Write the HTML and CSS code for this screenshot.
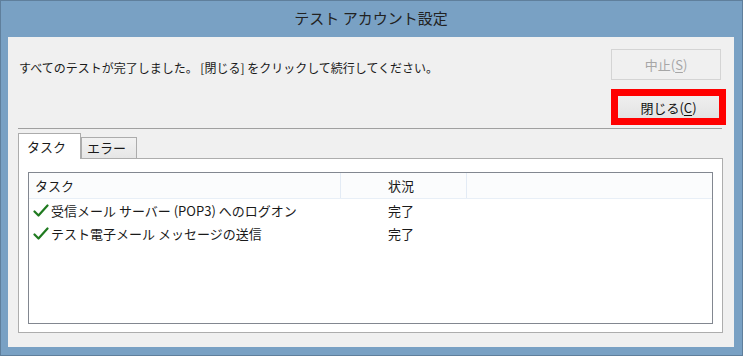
FILE: index.html
```html
<!DOCTYPE html>
<html lang="ja">
<head>
<meta charset="utf-8">
<title>テスト アカウント設定</title>
<link rel="stylesheet" href="styles.css">
</head>
<body>
<div class="window">
  <div class="titlebar">テスト アカウント設定</div>
  <div class="client">
    <div class="header">
      <div class="message">すべてのテストが完了しました。 [閉じる] をクリックして続行してください。</div>
      <div class="btn btn-disabled">中止(<u>S</u>)</div>
      <div class="btn btn-close">閉じる(<u>C</u>)</div>
    </div>
    <div class="separator"></div>
    <div class="tabs">
      <div class="tab tab-active">タスク</div>
      <div class="tab">エラー</div>
    </div>
    <div class="panel">
      <div class="listview">
        <div class="lv-row lv-head">
          <div class="col col-task">タスク</div>
          <div class="col col-status">状況</div>
          <div class="col col-rest"></div>
        </div>
        <div class="lv-row">
          <div class="col col-task"><svg class="check" viewBox="0 0 16 14" width="16" height="14"><path d="M1.5 7.5 L5.5 11.5 L14.5 1.5" fill="none" stroke="#1f7a1f" stroke-width="2.2" stroke-linecap="round" stroke-linejoin="round"/></svg>受信メール サーバー (POP3) へのログオン</div>
          <div class="col col-status">完了</div>
        </div>
        <div class="lv-row">
          <div class="col col-task"><svg class="check" viewBox="0 0 16 14" width="16" height="14"><path d="M1.5 7.5 L5.5 11.5 L14.5 1.5" fill="none" stroke="#1f7a1f" stroke-width="2.2" stroke-linecap="round" stroke-linejoin="round"/></svg>テスト電子メール メッセージの送信</div>
          <div class="col col-status">完了</div>
        </div>
      </div>
    </div>
  </div>
</div>
</body>
</html>
```
FILE: styles.css
```css
* { box-sizing: border-box; }
html, body { margin: 0; padding: 0; }
body {
  width: 743px;
  height: 356px;
  font-family: "Noto Sans CJK JP", "Noto Sans", sans-serif;
  font-size: 12px;
  color: #1a1a1a;
  overflow: hidden;
}
.window {
  width: 743px;
  height: 356px;
  background: #79a1c4;
  border: 1px solid #5f7f9c;
  display: flex;
  flex-direction: column;
  padding: 0 8px 8px 7px;
}
.titlebar {
  height: 36px;
  line-height: 34px;
  text-align: center;
  font-size: 15px;
  color: #222;
  flex: none;
}
.client {
  flex: 1;
  background: #f0f0f0;
  display: flex;
  flex-direction: column;
  padding: 12px 8px 14px 10px;
}
.header {
  display: grid;
  grid-template-columns: 1fr auto;
  grid-template-rows: 31px 36px;
  row-gap: 9px;
}
.message {
  grid-column: 1;
  grid-row: 1;
  align-self: center;
  padding-top: 6px;
  padding-left: 1px;
  white-space: nowrap;
}
.btn {
  display: flex;
  align-items: center;
  justify-content: center;
  font-size: 13px;
}
.btn u { text-decoration: underline; text-underline-offset: 2px; }
.btn-disabled {
  grid-column: 2;
  grid-row: 1;
  width: 110px;
  margin-right: 3px;
  border: 1px solid #d4d4d4;
  background: #f0f0f0;
  color: #a6a6a6;
}
.btn-close {
  grid-column: 2;
  grid-row: 2;
  width: 115px;
  justify-self: end;
  border: 7px solid #ff0000;
  background: linear-gradient(#efefef, #e3e3e3);
  color: #111;
  padding-top: 1px;
}
.separator {
  height: 1px;
  background: #a0a0a0;
  margin: 3px 4px 0 0;
}
.tabs {
  display: flex;
  align-items: flex-end;
  margin-top: 4px;
  height: 25px;
  position: relative;
  z-index: 1;
}
.tab {
  height: 21px;
  width: 56px;
  border: 1px solid #acacac;
  border-bottom: none;
  background: linear-gradient(#f2f2f2, #e6e6e6);
  padding-left: 5px;
  line-height: 20px;
  font-size: 13px;
}
.tab-active {
  width: 63px;
  background: #fff;
  padding-left: 8px;
  line-height: 26px;
  margin-bottom: -1px;
  height: 26px;
}
.panel {
  flex: 1;
  margin-right: 3px;
  background: #fff;
  border: 1px solid #adadad;
  padding: 13px 9px 8px 9px;
  display: flex;
}
.listview {
  flex: 1;
  border: 1px solid #828790;
  background: #fff;
  font-size: 13px;
}
.lv-row {
  display: flex;
  height: 23px;
  align-items: center;
}
.lv-head {
  height: 26px;
  background: #fbfcfd;
  border-bottom: 1px solid #e8eff7;
  align-items: stretch;
}
.lv-head .col { display: flex; align-items: center; }
.lv-head .col-task, .lv-head .col-status { border-right: 1px solid #e3ebf5; }
.col { white-space: nowrap; }
.col-task {
  width: 312px;
  padding-left: 6px;
  display: flex;
  align-items: center;
}
.lv-row:not(.lv-head) .col-task { padding-left: 4px; }
.col-status {
  width: 126px;
  padding-left: 47px;
}
.col-rest { flex: 1; }
.check { margin-right: 2px; flex: none; }
```
